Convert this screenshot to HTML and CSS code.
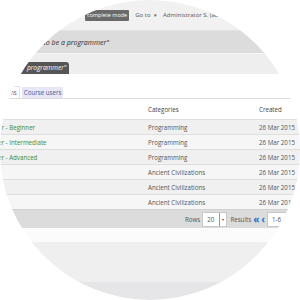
FILE: index.html
```html
<!DOCTYPE html>
<html lang="en">
<head>
  <meta charset="UTF-8">
  <meta name="viewport" content="width=device-width, initial-scale=1.0">
  <title>Session courses</title>
  <link rel="stylesheet" href="styles.css">
</head>
<body>

  <!-- Round lens over the admin screen -->
  <div class="lens">
    <div class="screen">

      <!-- Top bar -->
      <header class="topbar">
        <span class="mode">complete mode</span>
        <span class="goto">Go to <span class="caret">&#9662;</span></span>
        <span class="user">Administrator S. (admin)</span>
      </header>

      <!-- Breadcrumb -->
      <div class="crumbs">
        <span class="crumb">How to be a programmer"</span>
      </div>

      <!-- Sub bar with active session -->
      <div class="subbar">
        <span class="session-tab">programmer"</span>
      </div>

      <!-- Content -->
      <div class="content">
        <nav class="tabs">
          <span class="tab active">Sessions</span>
          <span class="tab">Course users</span>
        </nav>

        <table class="grid">
          <thead>
            <tr>
              <th class="col-title"></th>
              <th class="col-cat">Categories</th>
              <th class="col-date">Created</th>
            </tr>
          </thead>
          <tbody>
            <tr>
              <td class="col-title"><a class="title">How to be a programmer - Beginner</a></td>
              <td>Programming</td>
              <td>26 Mar 2015</td>
            </tr>
            <tr>
              <td class="col-title"><a class="title">How to be a programmer - Intermediate</a></td>
              <td>Programming</td>
              <td>26 Mar 2015</td>
            </tr>
            <tr>
              <td class="col-title"><a class="title">How to be a programmer - Advanced</a></td>
              <td>Programming</td>
              <td>26 Mar 2015</td>
            </tr>
            <tr>
              <td class="col-title"></td>
              <td>Ancient Civilizations</td>
              <td>26 Mar 2015</td>
            </tr>
            <tr>
              <td class="col-title"></td>
              <td>Ancient Civilizations</td>
              <td>26 Mar 2015</td>
            </tr>
            <tr>
              <td class="col-title"></td>
              <td>Ancient Civilizations</td>
              <td>26 Mar 2015</td>
            </tr>
          </tbody>
        </table>

        <div class="pager">
          <span class="label">Rows</span>
          <span class="select">20 <span class="select-btn">&#9662;</span></span>
          <span class="label">Results</span>
          <span class="nav-ico">&laquo;</span>
          <span class="nav-ico">&lsaquo;</span>
          <span class="select page">1-6 <span class="select-btn">&#9662;</span></span>
        </div>
      </div>

      <!-- Below the grid -->
      <div class="band band-white"></div>
      <div class="band band-light"></div>
      <div class="band band-mid"></div>

    </div>
  </div>

</body>
</html>
```

FILE: styles.css
```css
/* General */
body {
  margin: 0;
  background: #ffffff;
  font-family: "Open Sans", "Liberation Sans", sans-serif;
  color: #555555;
}

.lens {
  width: 300px;
  height: 300px;
  border-radius: 50%;
  overflow: hidden;
}

.screen {
  width: 300px;
  display: flex;
  flex-direction: column;
}

/* Top bar */
.topbar {
  height: 31px;
  box-sizing: border-box;
  display: flex;
  align-items: center;
  padding-left: 85px;
  background: #f1f1f1;
  border-bottom: 1px solid #e4e4e4;
  font-size: 6px;
  color: #555555;
  white-space: nowrap;
}

.mode {
  background: #6a6a6a;
  color: #ffffff;
  font-size: 5.5px;
  padding: 1.5px 2px;
  border-radius: 1px;
  margin-right: 6px;
}

.goto {
  margin-right: 6px;
}

.caret {
  font-size: 5px;
  margin-left: 2px;
}

/* Breadcrumb */
.crumbs {
  height: 22px;
  display: flex;
  align-items: center;
  padding-left: 28px;
  background: #dcdcdc;
  border-bottom: 1px solid #f4f4f4;
  font-size: 7px;
  font-style: italic;
  color: #2e2e2e;
}

/* Sub bar */
.subbar {
  height: 20px;
  display: flex;
  align-items: flex-end;
  padding-left: 20px;
  background: #eeeeee;
}

.session-tab {
  background: #555555;
  color: #ffffff;
  font-size: 6.5px;
  font-style: italic;
  padding: 1px 3px 2px 7px;
  border-top-right-radius: 3px;
}

/* Content */
.content {
  background: #ffffff;
  padding-top: 12px;
}

.tabs {
  display: flex;
  align-items: flex-end;
  gap: 2px;
  border-bottom: 1px solid #dddddd;
  margin-left: -11px;
  font-size: 6.2px;
}

.tab {
  height: 11px;
  line-height: 11px;
  padding: 0 2px;
  background: #e6e6f6;
  color: #4c5e8e;
}

.tab.active {
  background: #ffffff;
  color: #4c5e8e;
  border: 1px solid #e4e4e4;
  border-bottom: none;
}

/* Grid */
.grid {
  width: 300px;
  border-collapse: collapse;
  table-layout: fixed;
  font-size: 6.2px;
}

.grid th {
  height: 20px;
  text-align: left;
  font-weight: normal;
  color: #444444;
  padding: 0;
}

.grid td {
  height: 14px;
  padding: 0;
  border-top: 1px solid #dedede;
  white-space: nowrap;
  overflow: hidden;
}

.grid tbody tr:nth-child(odd) td {
  background: #f0f0f0;
}

.grid tbody tr:nth-child(even) td {
  background: #f6f6f6;
}

.col-title {
  width: 148px;
}

.col-cat {
  width: 111px;
}

.title {
  margin-left: -69px;
  color: #3b8a32;
}

/* Pager */
.pager {
  height: 18px;
  display: flex;
  align-items: center;
  gap: 2px;
  padding-left: 185px;
  background: #dcdcdc;
  border-top: 1px solid #d0d0d0;
  font-size: 6.2px;
  color: #555555;
  white-space: nowrap;
}

.select {
  display: flex;
  align-items: center;
  gap: 5px;
  height: 13px;
  padding-left: 4px;
  background: #ffffff;
  border: 1px solid #c8c8c8;
  margin-right: 1px;
}

.select-btn {
  height: 13px;
  width: 6px;
  font-size: 4px;
  line-height: 13px;
  text-align: center;
  border-left: 1px solid #999999;
}

.nav-ico {
  color: #2a6fd6;
  font-weight: bold;
  font-size: 10px;
  line-height: 10px;
}

.page {
  width: 18px;
}

/* Bands below grid */
.band-white {
  height: 14px;
  background: #fbfbfb;
}

.band-light {
  height: 40px;
  background: #efeff0;
}

.band-mid {
  height: 30px;
  background: #e6e6e8;
}
```
